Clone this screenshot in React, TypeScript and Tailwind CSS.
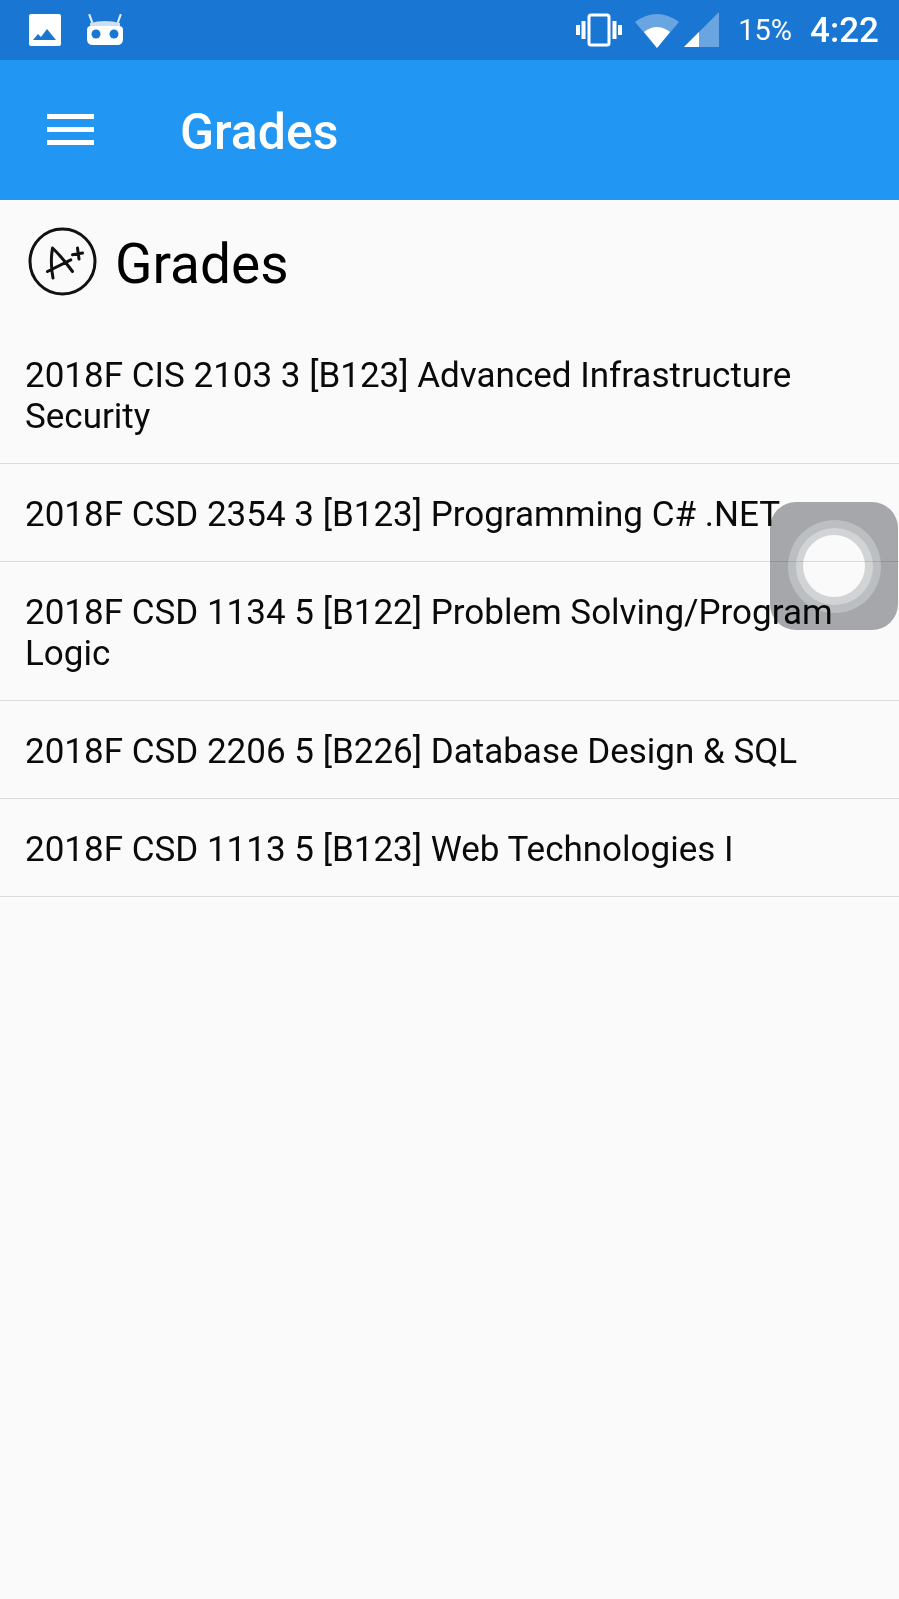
import React from 'react'

const courses = [
  '2018F CIS 2103 3 [B123] Advanced Infrastructure Security',
  '2018F CSD 2354 3 [B123] Programming C# .NET',
  '2018F CSD 1134 5 [B122] Problem Solving/Program Logic',
  '2018F CSD 2206 5 [B226] Database Design & SQL',
  '2018F CSD 1113 5 [B123] Web Technologies I',
]

function StatusBar() {
  return (
    <div className="h-[60px] bg-[#1976d2] flex items-center text-white shrink-0">
      <svg className="ml-[29px] w-[32px] h-[32px]" viewBox="0 0 32 32">
        <rect x="0" y="0" width="32" height="32" rx="2" fill="#fff" />
        <path d="M4 26l5-6 3 3 6-8 9 11z" fill="#1976d2" />
      </svg>
      <svg className="ml-[26px] w-[36px] h-[32px] mb-[1px]" viewBox="0 0 36 32">
        <path d="M2.500 1l2.500 7M33.500 1l-2.500 7" stroke="#e3edf9" strokeWidth="2.200" strokeLinecap="round" />
        <path d="M3 9q15-4 30 0v3H3z" fill="#cfdff3" />
        <path d="M0 16q0-4 4-4h28q4 0 4 4v9q0 6-6 6H6q-6 0-6-6z" fill="#fff" />
        <circle cx="9" cy="20" r="4.500" fill="#1976d2" />
        <circle cx="27" cy="20" r="4.500" fill="#1976d2" />
      </svg>
      <div className="ml-auto flex items-center">
        <svg className="w-[46px] h-[34px]" viewBox="0 0 46 34">
          <rect x="13" y="2" width="20" height="30" rx="2" fill="none" stroke="#fff" strokeWidth="3" />
          <path d="M7.500 8v18M2 12v10M38.500 8v18M44 12v10" stroke="#fff" strokeWidth="4" />
        </svg>
        <svg className="ml-[13px] w-[44px] h-[36px]" viewBox="0 0 44 36">
          <path d="M0 10Q22-6 44 10L22 36z" fill="#fff" fillOpacity="0.35" />
          <path d="M9 20Q22 10 35 20L22 36z" fill="#fff" />
        </svg>
        <svg className="ml-[5px] w-[36px] h-[36px]" viewBox="0 0 36 36">
          <path d="M0 35L35 0v35z" fill="#fff" fillOpacity="0.35" />
          <path d="M0 35l15-15v15z" fill="#fff" />
        </svg>
        <span className="ml-[18px] text-[29px] leading-none font-['Roboto',sans-serif]">15%</span>
        <span className="ml-[18px] mr-[20px] text-[35px] leading-none font-medium font-['Roboto',sans-serif]">4:22</span>
      </div>
    </div>
  )
}

function AppBar() {
  return (
    <div className="h-[140px] bg-[#2196f3] flex items-center text-white shrink-0">
      <div className="ml-[47px] w-[47px] flex flex-col gap-[8px] mb-[1px]">
        <div className="h-[5px] bg-white" />
        <div className="h-[5px] bg-white" />
        <div className="h-[5px] bg-white" />
      </div>
      <span className="ml-[86px] text-[50px] font-medium leading-none font-['Roboto',sans-serif] mt-[4px]">Grades</span>
    </div>
  )
}

function App() {
  return (
    <div className="relative w-[899px] h-[1599px] overflow-hidden bg-[#fafafa] flex flex-col font-['Roboto',sans-serif]">
      <StatusBar />
      <AppBar />
      <div className="h-[125px] flex items-center pl-[28px] shrink-0">
        <svg className="w-[69px] h-[69px] mb-[2px]" viewBox="0 0 69 69" fill="none" stroke="#111" strokeLinecap="round" strokeLinejoin="round">
          <circle cx="34.500" cy="34.500" r="32.500" strokeWidth="3" />
          <path d="M25 51Q22 36 24.500 21Q34 30 44.500 44.500M19.500 44.500L42.800 32.800M49.500 21L51 32M44.500 27.800L54.500 26" strokeWidth="3" />
        </svg>
        <span className="ml-[18px] text-[55px] leading-none text-black mt-[4px]">Grades</span>
      </div>
      <div className="flex flex-col">
        {courses.map((c) => (
          <div key={c} className="pl-[25px] pr-[25px] pt-[30px] pb-[26px] border-b border-[#dcdcdc] text-[35px] leading-[41px] text-[#0a0a0a]">
            {c}
          </div>
        ))}
      </div>
      {/* floating assistive button */}
      <div className="absolute left-[770px] top-[502px] w-[128px] h-[128px] rounded-[26px] bg-[#a8abaf] mix-blend-multiply flex items-center justify-center">
        <div className="w-[93px] h-[93px] rounded-full bg-[#c0c3c6] flex items-center justify-center">
          <div className="w-[77px] h-[77px] rounded-full bg-[#d7d8da] flex items-center justify-center">
            <div className="w-[62px] h-[62px] rounded-full bg-white" />
          </div>
        </div>
      </div>
    </div>
  )
}

export default App
